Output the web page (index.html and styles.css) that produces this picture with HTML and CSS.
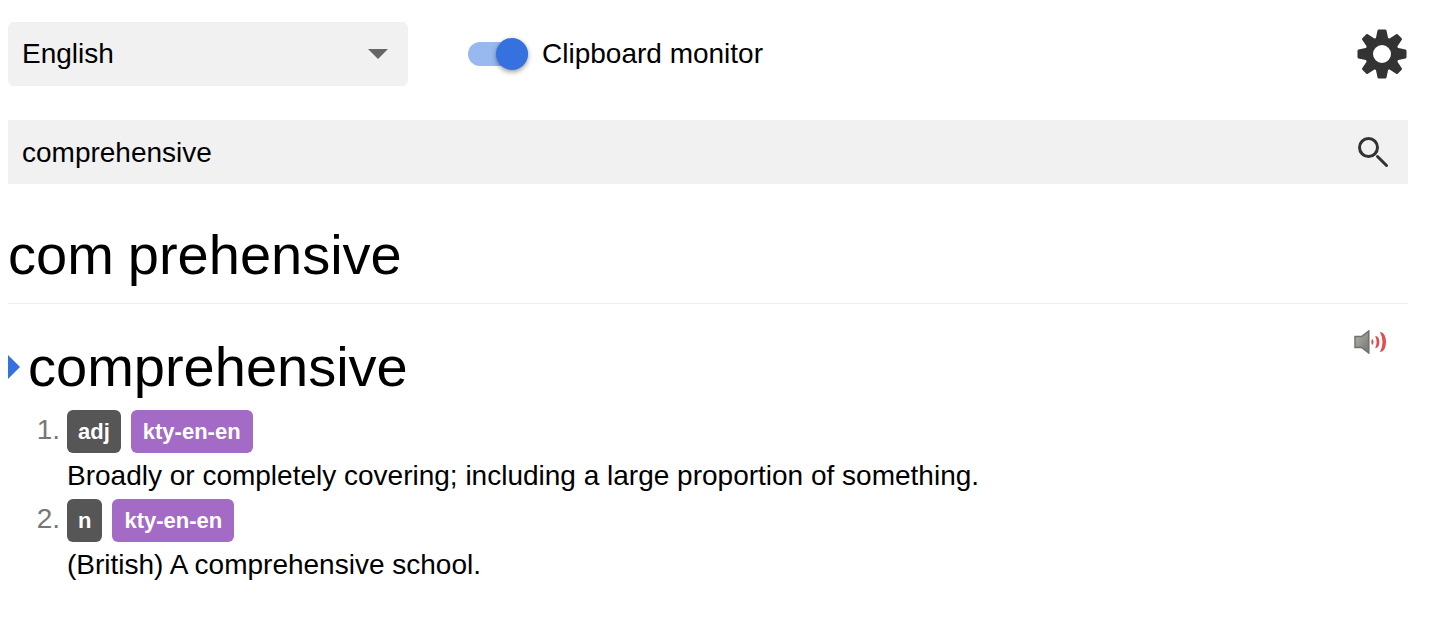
FILE: index.html
```html
<!DOCTYPE html>
<html lang="en">
<head>
<meta charset="utf-8">
<meta name="viewport" content="width=device-width, initial-scale=1">
<title>Dictionary search</title>
<link rel="stylesheet" href="styles.css">
</head>
<body>
<main class="page">
  <header class="toolbar">
    <div class="select-box">
      <select class="language" aria-label="Language"><option>English</option></select>
      <svg class="select-arrow" viewBox="0 0 20 10" aria-hidden="true"><path d="M0 0h20L10 10z"/></svg>
    </div>
    <label class="monitor">
      <input class="switch" type="checkbox" role="switch" checked>
      <span>Clipboard monitor</span>
    </label>
    <button class="icon-button settings" type="button" aria-label="Settings">
      <svg class="gear" viewBox="-25 -25 50 50" aria-hidden="true">
        <defs>
          <path id="tooth" d="M-6.500-14L-4.500-23.500Q-4.300-24.500-3.300-24.500H3.300Q4.300-24.500 4.500-23.500L6.500-14z"/>
          <path id="corner-tooth" d="M-6-14L-4-24Q-3.800-25-2.800-25H2.800Q3.800-25 4-24L6-14z"/>
        </defs>
        <circle class="gear-ring" r="13"/>
        <use href="#tooth"/>
        <use href="#corner-tooth" transform="rotate(45)"/>
        <use href="#tooth" transform="rotate(90)"/>
        <use href="#corner-tooth" transform="rotate(135)"/>
        <use href="#tooth" transform="rotate(180)"/>
        <use href="#corner-tooth" transform="rotate(225)"/>
        <use href="#tooth" transform="rotate(270)"/>
        <use href="#corner-tooth" transform="rotate(315)"/>
      </svg>
    </button>
  </header>

  <form class="search">
    <input class="search-text" type="text" value="comprehensive" aria-label="Search text">
    <button class="icon-button search-button" type="button" aria-label="Search">
      <svg class="magnifier" viewBox="0 0 32 32" aria-hidden="true"><circle cx="11.500" cy="11.500" r="9"/><path d="M20.500 20.500L29.500 29.500"/></svg>
    </button>
  </form>

  <h1 class="query">com&#8197;prehensive</h1>

  <article class="entry">
    <div class="entry-head">
      <svg class="marker" viewBox="0 0 12 24" aria-hidden="true"><path d="M0 0L12 12L0 24z"/></svg>
      <h2 class="headword">comprehensive</h2>
      <button class="icon-button audio" type="button" aria-label="Play audio">
        <svg class="speaker" viewBox="0 0 32 24" aria-hidden="true">
          <defs><linearGradient id="metal" x1="0" y1="0" x2="1" y2="1"><stop offset="0" stop-color="#b5b5b0"/><stop offset="1" stop-color="#74746f"/></linearGradient></defs>
          <path d="M1 6.500H7.500L14.800 1V23L7.500 17.500H1z" fill="url(#metal)" stroke="#71716c" stroke-width="1.500"/>
          <g fill="#dc4f53">
            <path d="M18 8.800Q21.200 12 18 15.200Q16.500 12 18 8.800z"/>
            <path d="M21.200 6Q23.500 5.500 24.800 8.500Q26.200 12 24.800 15.500Q23.500 18.500 21.200 18Q24 12 21.200 6z"/>
            <path d="M26 2Q28.500 1.500 30.500 5Q33.500 12 30.500 19Q28.500 22.500 26 22Q31 12 26 2z"/>
          </g>
        </svg>
      </button>
    </div>
    <ol class="senses">
      <li class="sense">
        <div class="tags"><span class="tag">adj</span><span class="tag tag-dictionary">kty-en-en</span></div>
        <p class="gloss">Broadly or completely covering; including a large proportion of something.</p>
      </li>
      <li class="sense">
        <div class="tags"><span class="tag">n</span><span class="tag tag-dictionary">kty-en-en</span></div>
        <p class="gloss">(British) A comprehensive school.</p>
      </li>
    </ol>
  </article>
</main>
</body>
</html>
```

FILE: styles.css
```css
* { box-sizing: border-box; }
body {
  margin: 0;
  background: #fff;
  color: #000;
  font: 28px/44px "Helvetica Neue", "Liberation Sans", Arial, sans-serif;
}
h1, h2, p, ol { margin: 0; padding: 0; }
svg { display: block; }
button, input, select { margin: 0; font: inherit; color: inherit; }

.page { padding: 22px 42px 22px 8px; }

.toolbar { display: flex; align-items: center; }
.select-box { display: grid; align-items: center; width: 400px; }
.select-box > * { grid-area: 1 / 1; }
.language {
  width: 100%;
  height: 64px;
  padding: 0 48px 0 14px;
  border: 0;
  border-radius: 6px;
  background: #f1f1f1;
  appearance: none;
}
.select-arrow {
  width: 20px;
  height: 10px;
  margin-right: 20px;
  justify-self: end;
  fill: #666;
  pointer-events: none;
}
.monitor { display: flex; align-items: center; gap: 14px; margin-left: 60px; }
.switch {
  display: flex;
  align-items: center;
  justify-content: flex-end;
  width: 60px;
  height: 24px;
  border-radius: 12px;
  background: #98b9f0;
  appearance: none;
}
.switch::before {
  content: "";
  width: 32px;
  height: 32px;
  flex: none;
  border-radius: 50%;
  background: #3671e0;
  box-shadow: 0 2px 5px rgb(0 0 0 / 40%);
}
.switch:not(:checked) { justify-content: flex-start; background: #bbb; }
.icon-button { padding: 0; border: 0; background: none; cursor: pointer; }
.settings { margin-left: auto; }
.gear { width: 52px; height: 50px; fill: #333; }
.gear-ring { fill: none; stroke: #333; stroke-width: 8px; }

.search { display: flex; height: 64px; margin-top: 34px; background: #f1f1f1; }
.search-text { flex: 1; min-width: 0; padding: 2px 14px 0; border: 0; outline: 0; background: none; }
.search-button { padding: 0 19px; }
.magnifier { width: 32px; height: 32px; fill: none; stroke: #333; stroke-width: 3px; stroke-linecap: round; }

.query {
  margin-top: 31px;
  padding-bottom: 8px;
  border-bottom: 1px solid #eee;
  font-size: 56px;
  line-height: 80px;
  font-weight: 400;
}
.entry { padding-top: 24px; }
.entry-head { display: flex; align-items: center; }
.marker { width: 12px; height: 24px; margin-right: 8px; fill: #3671e0; }
.headword { font-size: 56px; line-height: 78px; font-weight: 400; }
.audio { align-self: flex-start; margin: 2px 22px 0 auto; }
.speaker { width: 32px; height: 24px; }

.senses { list-style: none; counter-reset: sense; margin-top: 4px; }
.sense { display: grid; grid-template-columns: 52px 1fr; column-gap: 7px; counter-increment: sense; }
.sense::before {
  content: counter(sense) ".";
  grid-row: 1 / 3;
  color: #777;
  line-height: 40px;
  text-align: right;
}
.tags, .gloss { grid-column: 2; }
.tags { display: flex; gap: 10px; }
.tag {
  padding: 0 11px;
  border-radius: 6px;
  background: #565656;
  color: #fff;
  font-size: 22px;
  line-height: 43px;
  font-weight: 700;
}
.tag-dictionary { padding: 0 12px; background: #a36bc5; }
.gloss { line-height: 46px; }
```
